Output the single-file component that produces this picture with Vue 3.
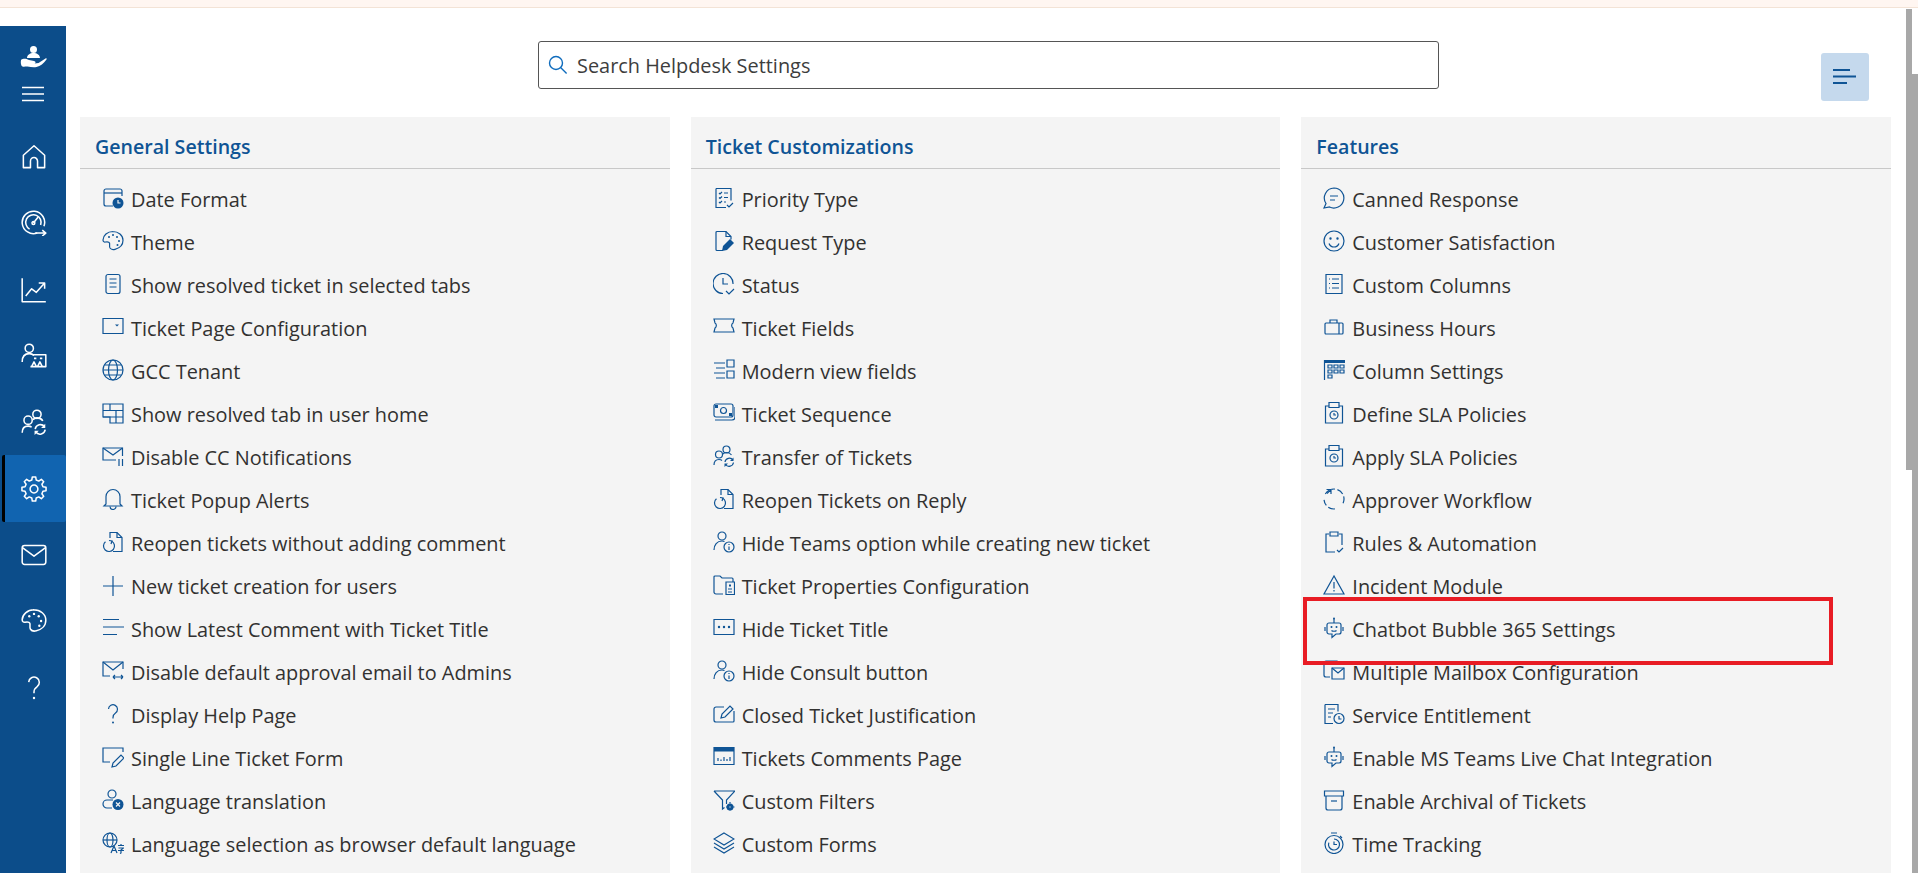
<template>
  <div class="page">
    <div class="notice"></div>
    <div class="shell">
      <nav class="sidebar">
        <div class="logo">
          <svg width="28" height="24" viewBox="0 0 28 24">
            <path class="white" d="M14.500 1a3.500 3.500 0 1 1 0 7a3.500 3.500 0 1 1 0-7zM8 13c0-3 3-5 6.500-5s6.500 2 6.500 5z" />
            <path class="white" d="M2 15c3-2 5-1 8 0l5 1c2 .3 2 2 .5 2.500l4-.5 7-4.500c1-.5 1.500.5 1 1-3 4-6 6.500-10 7.500-3 .6-6 0-9-.5-2-.2-3 .5-5 0-1.500-.5-2-4-1.500-6z" />
          </svg>
        </div>
        <svg class="burger" width="22" height="16" viewBox="0 0 22 16">
          <path d="M0 1.500h22M0 8h22M0 14.500h22" />
        </svg>
        <a v-for="item in sideItems" :key="item" class="side-link" :class="{ active: item === 'gear' }">
          <svg width="26" height="26" viewBox="0 0 22 22">
            <path v-for="d in icons[item]" :key="d" :d="d.replace(/^[#~]/, '')" :class="kind(d)" />
          </svg>
        </a>
      </nav>
      <main class="content">
        <div class="toolbar">
          <label class="search">
            <svg width="20" height="20" viewBox="0 0 20 20">
              <path d="M8 1.500a6.500 6.500 0 1 0 0 13a6.500 6.500 0 1 0 0-13zM12.600 12.600l6 6" />
            </svg>
            <span>Search Helpdesk Settings</span>
          </label>
          <button class="toggle">
            <svg width="24" height="18" viewBox="0 0 24 18">
              <path d="M0 2h17M0 8.500h23M0 15h14" />
            </svg>
          </button>
        </div>
        <div class="columns">
          <section v-for="col in columns" :key="col.title" class="card">
            <h2>{{ col.title }}</h2>
            <ul>
              <li v-for="row in col.rows" :key="row[0]">
                <svg class="icon" width="22" height="22" viewBox="0 0 22 22">
                  <path v-for="d in icons[row[1]]" :key="d" :d="d.replace(/^[#~]/, '')" :class="kind(d)" />
                </svg>
                <span>{{ row[0] }}</span>
              </li>
            </ul>
          </section>
        </div>
      </main>
    </div>
    <div class="highlight"></div>
    <div class="scrollbar"></div>
  </div>
</template>

<script setup>
// circle as a path
const c = (x, y, r) => `M${x - r} ${y}a${r} ${r} 0 1 0 ${2 * r} 0a${r} ${r} 0 1 0 ${-2 * r} 0z`

// clockwise arc on a circle, angles in degrees, b > a
const arc = (x, y, r, a, b) => {
  const p = (d) => [x + r * Math.cos((d * Math.PI) / 180), y + r * Math.sin((d * Math.PI) / 180)].map((n) => n.toFixed(2)).join(' ')
  return `M${p(a)}A${r} ${r} 0 ${b - a > 180 ? 1 : 0} 1 ${p(b)}`
}

// cog outline with n teeth
const cog = (x, y, ro, ri, n) => {
  const pts = []
  for (let i = 0; i < n; i++) {
    const t = (i * 360) / n
    for (const [r, d] of [[ri, -14], [ro, -8], [ro, 8], [ri, 14]]) {
      const a = ((t + d) * Math.PI) / 180
      pts.push(`${(x + r * Math.cos(a)).toFixed(2)} ${(y + r * Math.sin(a)).toFixed(2)}`)
    }
  }
  return `M${pts.join('L')}z`
}

const kind = (d) => (d[0] === '#' ? 'fill' : d[0] === '~' ? 'knock' : '')

// '#' = filled, '~' = stroked in background colour, otherwise stroked
const icons = {
  home: ['M2 20V9.500L11 1.500l9 8V20h-6v-5.500a3 3 0 0 0-6 0V20z'],
  speed: [arc(10.500, 10.500, 9.500, 70, 380), arc(10.500, 10.500, 6.500, 120, 380), 'M10.500 11l4-5', c(10.500, 11, 1.200), 'M12 19.500h9M18 17l3 2.500-3 2.500'],
  chart: ['M1 1v20h20', 'M4 16l5-6 4 3 7-8M15 5h5v5'],
  usersBoard: [c(7, 4.500, 3.500), 'M1 16c0-4 2-7 6-7 2 0 3 .6 4 1.500', 'M10 10h11v10H8', 'M9 20l2-4 2 4M14 20l2-4 2 4M11 13h2M16 13h2'],
  transfer: [c(13.500, 4.500, 3.500), c(6, 9.500, 3.500), 'M1 20c0-3.500 2-5.500 5-5.500 1.500 0 2.500.5 3 1', 'M10 9c1-1 2-1.500 3.500-1.500 2.500 0 4 1 5 2.500', 'M12 17a4.500 4.500 0 0 1 8-2M20.500 17.500a4.500 4.500 0 0 1-8 2', '#M20.500 12.500v3.500h-3.500z', '#M11.500 22v-3.500h3.500z'],
  gear: [cog(11, 11, 10.300, 7.800, 8), c(11, 11, 3.300)],
  mail: ['M3 3h16a2 2 0 0 1 2 2v12a2 2 0 0 1-2 2H3a2 2 0 0 1-2-2V5a2 2 0 0 1 2-2z', 'M1.500 5l9.500 7 9.500-7'],
  palette: ['M11 1.500C5.500 1.500 1 5.500 1 10c0 1.500 1 2.200 2.500 2 2-.3 3.500-.5 4 1 .5 1.800-.5 3 .5 5 1 1.500 3 1.800 5 1.300 4-1 8-4 8-9 0-5-4.500-8.800-10.500-8.800z', '#' + c(7, 7, 1), '#' + c(11, 5, 1), '#' + c(15, 7, 1), '#' + c(17, 11, 1), '#' + c(15.500, 15, 1)],
  help: ['M6.500 6a4.500 4.500 0 1 1 7 4c-1.500 1-2.500 2-2.500 4.500v1', '#' + c(11, 19.500, 1)],

  date: ['M20 9V4a2 2 0 0 0-2-2H4a2 2 0 0 0-2 2v13a2 2 0 0 0 2 2h7', 'M2 6h18', '#' + c(16, 16, 5.500), '~M16 13v3h2.500'],
  doc: ['M6 1.500h10a2 2 0 0 1 2 2v15a2 2 0 0 1-2 2H6a2 2 0 0 1-2-2v-15a2 2 0 0 1 2-2z', 'M7.500 6h7M7.500 10h7M7.500 14h7'],
  ticketPage: ['M1 2.500h20v15H1z', '#M13 8.500h4l-2 2z'],
  globe: [c(11, 11, 10), 'M11 1a4.500 10 0 0 0 0 20a4.500 10 0 0 0 0-20z', 'M1 11h20M2.500 6h17M2.500 16h17'],
  table: ['M1 2h20v19H8v-6H1z', 'M1 8.500h20M1 15h20M8 2v6.500M14 8.500V21'],
  mailPause: ['M20.500 11V3H1v12h13', 'M1 3l10 7 9.500-7', 'M17 14v7M20.500 14v7'],
  bell: ['M4 16V8.500a7 7 0 0 1 14 0V16l2 2H2z', 'M8 18.500a3 3 0 0 0 6 0'],
  reopen: ['M8 7V1.500h7l5 5V20.500H11', 'M15 1.500v5h5', arc(7, 15, 5.500, -60, 230), 'M7 9.500l3 0.500-1 3'],
  plus: ['M11 2v20M1 12h20'],
  lines: ['M1 2.500h16M1 10h21M1 17.500h14'],
  mailSwap: ['M21 9V2H1v14h7', 'M1 2l10 8 10-8', 'M11 17h10M11 17l2-2M11 17l2 2M21 17l-2-2M21 17l-2 2'],
  formEdit: ['M21 6V2H1v14h7', 'M10 21l1-4 8-8 3 3-8 8z'],
  userX: [c(10, 5, 4), 'M10 19H5a4 4 0 0 1 0-8h6', '#' + c(16, 15.500, 5.500), '~M14 13.500l4 4M18 13.500l-4 4'],
  lang: [c(8, 8, 7), 'M8 1a3 7 0 0 0 0 14a3 7 0 0 0 0-14z', 'M1 8h14', 'M9 21l3-7 3 7M10 18.500h4', 'M16 13.500h6M19 12v1.500M16.500 16h5l-2.500 2v3l-1 .5M16 18.500h6'],

  priority: ['M3 1.500h15v12M3 1.500v19h10', 'M6 6l1 1 2-2M11 6h4M6 10.500l1 1 2-2M11 10.500h4M6 15l1 1 2-2M11 15h2', 'M14 18l2 2 4-4'],
  request: ['M10 20.500H4a1 1 0 0 1-1-1v-17a1 1 0 0 1 1-1h9l5 5v3', 'M13 1.500v5h5', '#M9 21l1-5 7-7 4 4-7 7z'],
  status: ['M10 20.500a10 10 0 1 1 10-9.500', 'M10 5v6h5', 'M13 18l3 3 5-5'],
  ticket: ['M1 3h20l-1 4a3 3 0 0 0 0 5l1 4H1l1-4a3 3 0 0 0 0-5z'],
  modern: ['M1 4h11M3 9h9M1 14h11M3 19h9', 'M14 1h7v7h-7zM14 12h7v7h-7z'],
  sequence: ['M3 2h15a2 2 0 0 1 2 2v9a2 2 0 0 1-2 2H3a2 2 0 0 1-2-2V4a2 2 0 0 1 2-2z', c(10.500, 8.500, 3), '#M2 3h3v3H2zM16 11h3v3h-3z', 'M2 18h17a3 3 0 0 0 3-3V5'],
  userInfo: [c(9, 5, 4), 'M1 19c0-5 3-9 8-9 1 0 2 .2 2.500.5', c(16, 16, 5), 'M16 15.500v3.500M16 13v1'],
  folder: ['M10 20H3a2 2 0 0 1-2-2V3a1 1 0 0 1 1-1h5l2 2h10a1 1 0 0 1 1 1v3', 'M13 8h8.500v12.500H13z', 'M15 15h4M15 18h4', '#M16 10.500h2v2h-2z'],
  dots: ['M1 2.500h20v15H1z', '#' + c(6, 10, 1.200), '#' + c(11, 10, 1.200), '#' + c(16, 10, 1.200)],
  edit: ['M11 4H3a2 2 0 0 0-2 2v11a2 2 0 0 0 2 2h17a1 1 0 0 0 1-1V8', 'M8 15l1-4 8-8 3 3-8 8z'],
  bars: ['M1 1.500h20v17H1z', '#M1 1.500h20v4H1z', 'M5 15v-3M8 15v-1.500M11 15v-4M14 15v-2M17 15v-4'],
  filter: ['M1 2h21l-8.500 9v4M1 2l8.500 9v9l2-1.500', '#' + c(17, 18, 3.500), '~M17 17.500v1', 'M17 13v1.500M17 21.500v1M13 18h1.500M20 18h1.500'],
  layers: ['M11 1l10 6-10 6-10-6z', 'M1 11l10 6 10-6', 'M1 15l10 6 10-6'],

  chat: ['M11 1a10 10 0 1 1-4.500 19L1 21l2-4.500A10 10 0 0 1 11 1z', 'M7 9h8M7 13h5'],
  smile: [c(11, 11, 10), '#' + c(7.500, 8.500, 1.200), '#' + c(14.500, 8.500, 1.200), 'M6 13.500c1 2.500 3 3.500 5 3.500s4-1 5-3.500'],
  columns: ['M3 1.500h16v19H3z', 'M6 6h1M9 6h7M6 10.500h1M9 10.500h7M6 15h1M9 15h7'],
  briefcase: ['M3 7h16a1 1 0 0 1 1 1v9a1 1 0 0 1-1 1H3a1 1 0 0 1-1-1V8a1 1 0 0 1 1-1z', 'M7 7V4h7v3M16 7v11'],
  colset: ['#M1 1h21v3H1z', 'M1.500 1v20', 'M5 6h4v3H5zM11 6h4v3h-4zM17 6h4v3h-4zM5 11h4v3H5zM11 11h4v3h-4zM17 11h4v3h-4zM5 16h4v3H5z'],
  sla: ['M6 4H2.500v17h17V4H16', 'M6 .500h10v5H6z', c(11, 13, 4), 'M11 11v2h2'],
  approver: [arc(11, 11, 10, -150, -120), arc(11, 11, 10, 140, 175), arc(11, 11, 10, 85, 125), arc(11, 11, 10, -15, 25), arc(11, 11, 10, -70, -30), arc(11, 11, 10, -105, -85), 'M3.500 1.500h4.500v4.500M8 1.500l-4 4'],
  rules: ['M6 3H3v18h9', 'M16 3h3v11', 'M7 1h8v4H7z', 'M14 19l2 2 4-4'],
  warning: ['M11 2L1 20h20z', 'M11 8v6.500M11 16v1.500'],
  bot: ['M6 6h10a2 2 0 0 1 2 2v7a2 2 0 0 1-2 2h-3l-4 3.500V17H6a2 2 0 0 1-2-2V8a2 2 0 0 1 2-2z', 'M11 2v4M2 10v4M20 10v4', '#' + c(11, 1.500, 1), '#' + c(8.500, 10, 1), '#' + c(13.500, 10, 1), 'M8.500 13.500c1 1 4 1 5 0'],
  mailbox: ['M3 1h11v3M3 1a2 2 0 0 0-2 2v12a2 2 0 0 0 2 2h4', 'M9 8h12v11H9z', 'M9 8l6 5 6-5'],
  entitle: ['M2 1.500h13v7M2 1.500v19h8', 'M5 6h7M5 10h5M5 14h3', c(16, 15.500, 5), 'M16 13v3h2.500'],
  archive: ['M1.500 2h19v5h-19z', 'M3 7v12a2 2 0 0 0 2 2h12a2 2 0 0 0 2-2V7', 'M8 12h6'],
  timer: [c(11, 12.500, 9), arc(11, 12.500, 5.500, -90, 200), 'M11 9.500v3h3', 'M8 1h6M17 4l2 2'],
}

const sideItems = ['home', 'speed', 'chart', 'usersBoard', 'transfer', 'gear', 'mail', 'palette', 'help']

const columns = [
  {
    title: 'General Settings',
    rows: [
      ['Date Format', 'date'],
      ['Theme', 'palette'],
      ['Show resolved ticket in selected tabs', 'doc'],
      ['Ticket Page Configuration', 'ticketPage'],
      ['GCC Tenant', 'globe'],
      ['Show resolved tab in user home', 'table'],
      ['Disable CC Notifications', 'mailPause'],
      ['Ticket Popup Alerts', 'bell'],
      ['Reopen tickets without adding comment', 'reopen'],
      ['New ticket creation for users', 'plus'],
      ['Show Latest Comment with Ticket Title', 'lines'],
      ['Disable default approval email to Admins', 'mailSwap'],
      ['Display Help Page', 'help'],
      ['Single Line Ticket Form', 'formEdit'],
      ['Language translation', 'userX'],
      ['Language selection as browser default language', 'lang'],
    ],
  },
  {
    title: 'Ticket Customizations',
    rows: [
      ['Priority Type', 'priority'],
      ['Request Type', 'request'],
      ['Status', 'status'],
      ['Ticket Fields', 'ticket'],
      ['Modern view fields', 'modern'],
      ['Ticket Sequence', 'sequence'],
      ['Transfer of Tickets', 'transfer'],
      ['Reopen Tickets on Reply', 'reopen'],
      ['Hide Teams option while creating new ticket', 'userInfo'],
      ['Ticket Properties Configuration', 'folder'],
      ['Hide Ticket Title', 'dots'],
      ['Hide Consult button', 'userInfo'],
      ['Closed Ticket Justification', 'edit'],
      ['Tickets Comments Page', 'bars'],
      ['Custom Filters', 'filter'],
      ['Custom Forms', 'layers'],
    ],
  },
  {
    title: 'Features',
    rows: [
      ['Canned Response', 'chat'],
      ['Customer Satisfaction', 'smile'],
      ['Custom Columns', 'columns'],
      ['Business Hours', 'briefcase'],
      ['Column Settings', 'colset'],
      ['Define SLA Policies', 'sla'],
      ['Apply SLA Policies', 'sla'],
      ['Approver Workflow', 'approver'],
      ['Rules & Automation', 'rules'],
      ['Incident Module', 'warning'],
      ['Chatbot Bubble 365 Settings', 'bot'],
      ['Multiple Mailbox Configuration', 'mailbox'],
      ['Service Entitlement', 'entitle'],
      ['Enable MS Teams Live Chat Integration', 'bot'],
      ['Enable Archival of Tickets', 'archive'],
      ['Time Tracking', 'timer'],
    ],
  },
]
</script>

<style>
html,
body {
  margin: 0;
  height: 873px;
  overflow: hidden;
  background: #fff;
}
</style>

<style scoped>
.page {
  position: relative;
  height: 873px;
  overflow: hidden;
  font-family: "Open Sans", "Noto Sans", sans-serif;
  color: #323130;
}

.notice {
  height: 7px;
  background: #fff6f1;
  border-bottom: 1px solid #f3e3d6;
}

.shell {
  display: flex;
  padding-top: 18px;
  height: 847px;
}

.sidebar {
  width: 66px;
  flex: none;
  background: #0c4d8a;
  display: flex;
  flex-direction: column;
  align-items: center;
}

.logo {
  height: 24px;
  margin-top: 19px;
  display: flex;
}

.white {
  fill: #fff;
}

.burger {
  margin-top: 17px;
  margin-bottom: 22px;
  flex: none;
}

.burger path {
  stroke: #fff;
  stroke-width: 1.300;
  fill: none;
}

.side-link {
  width: 64px;
  height: 66.300px;
  flex: none;
  margin-left: 2px;
  display: flex;
  align-items: center;
  justify-content: center;
  box-sizing: border-box;
  border-radius: 2px;
}

.side-link.active {
  background: #1164b0;
  border-left: 3px solid #000;
  padding-right: 3px;
}

.side-link path {
  fill: none;
  stroke: #fff;
  stroke-width: 1.300;
  stroke-linejoin: round;
}

.side-link path.fill {
  fill: #fff;
  stroke: none;
}

.content {
  flex: 1;
  min-width: 0;
  padding: 0 27px 0 14px;
}

.toolbar {
  position: relative;
  height: 91px;
  display: flex;
  justify-content: center;
}

.search {
  width: 901px;
  height: 48px;
  margin: 15px 0 0 6px;
  box-sizing: border-box;
  border: 1px solid #555;
  border-radius: 3px;
  display: flex;
  align-items: center;
  gap: 9px;
  padding-left: 9px;
  font-size: 19.900px;
  color: #3d3d3d;
}

.search svg {
  fill: none;
  stroke: #0f6cbd;
  stroke-width: 1.400;
}

.toggle {
  position: absolute;
  right: 22px;
  top: 27px;
  width: 48px;
  height: 48px;
  padding: 0;
  border: none;
  border-radius: 3px;
  background: #c5d9ed;
  display: flex;
  align-items: center;
  justify-content: center;
}

.toggle path {
  stroke: #0f5495;
  stroke-width: 2;
  fill: none;
}

.columns {
  display: grid;
  grid-template-columns: repeat(3, 1fr);
  gap: 21px;
}

.card {
  background: #f4f4f4;
  height: 756px;
}

.card h2 {
  margin: 0;
  height: 52px;
  box-sizing: border-box;
  padding: 17px 0 0 15px;
  font-size: 19.600px;
  line-height: 26px;
  font-weight: 600;
  color: #0f5495;
  border-bottom: 1px solid #c8c8c8;
}

.card ul {
  list-style: none;
  margin: 0;
  padding: 9px 0 0 22px;
}

.card li {
  height: 43px;
  display: flex;
  align-items: center;
  gap: 7px;
  font-size: 19.900px;
  white-space: nowrap;
}

.icon {
  flex: none;
  margin-top: -4px;
}

.icon path {
  fill: none;
  stroke: #0f5495;
  stroke-width: 1.200;
}

.icon path.fill {
  fill: #0f5495;
  stroke: none;
}

.icon path.knock {
  stroke: #f4f4f4;
}

.highlight {
  position: absolute;
  left: 1303px;
  top: 597px;
  width: 530px;
  height: 68px;
  box-sizing: border-box;
  border: 4px solid #e81c24;
}

.scrollbar {
  position: absolute;
  left: 1906px;
  top: 9px;
  width: 12px;
  height: 864px;
  background:
    linear-gradient(#a8a8a8, #a8a8a8) left top / 6px 461px no-repeat,
    linear-gradient(#a8a8a8, #a8a8a8) right 65px / 6px 100% no-repeat;
}
</style>
